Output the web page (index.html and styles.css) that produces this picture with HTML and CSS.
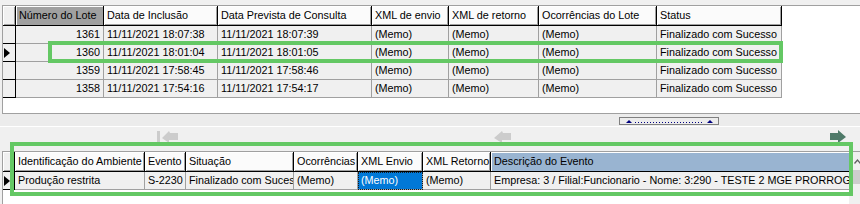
FILE: index.html
```html
<!DOCTYPE html>
<html lang="pt-BR">
<head>
<meta charset="utf-8">
<title>Lotes</title>
<link rel="stylesheet" href="styles.css">
</head>
<body>
<div class="top-strip"></div>

<div class="grid grid-top">
  <div class="row head">
    <div class="cell ind t0"></div>
    <div class="cell t1 sorted">Número do Lote</div>
    <div class="cell t2">Data de Inclusão</div>
    <div class="cell t3">Data Prevista de Consulta</div>
    <div class="cell t4">XML de envio</div>
    <div class="cell t5">XML de retorno</div>
    <div class="cell t6">Ocorrências do Lote</div>
    <div class="cell t7">Status</div>
  </div>
  <div class="row">
    <div class="cell ind t0"></div>
    <div class="cell t1 num">1361</div>
    <div class="cell t2">11/11/2021 18:07:38</div>
    <div class="cell t3">11/11/2021 18:07:39</div>
    <div class="cell t4">(Memo)</div>
    <div class="cell t5">(Memo)</div>
    <div class="cell t6">(Memo)</div>
    <div class="cell t7">Finalizado com Sucesso</div>
  </div>
  <div class="row">
    <div class="cell ind t0"><span class="arrow"></span></div>
    <div class="cell t1 num">1360</div>
    <div class="cell t2">11/11/2021 18:01:04</div>
    <div class="cell t3">11/11/2021 18:01:05</div>
    <div class="cell t4">(Memo)</div>
    <div class="cell t5">(Memo)</div>
    <div class="cell t6">(Memo)</div>
    <div class="cell t7">Finalizado com Sucesso</div>
  </div>
  <div class="row">
    <div class="cell ind t0"></div>
    <div class="cell t1 num">1359</div>
    <div class="cell t2">11/11/2021 17:58:45</div>
    <div class="cell t3">11/11/2021 17:58:46</div>
    <div class="cell t4">(Memo)</div>
    <div class="cell t5">(Memo)</div>
    <div class="cell t6">(Memo)</div>
    <div class="cell t7">Finalizado com Sucesso</div>
  </div>
  <div class="row">
    <div class="cell ind t0"></div>
    <div class="cell t1 num">1358</div>
    <div class="cell t2">11/11/2021 17:54:16</div>
    <div class="cell t3">11/11/2021 17:54:17</div>
    <div class="cell t4">(Memo)</div>
    <div class="cell t5">(Memo)</div>
    <div class="cell t6">(Memo)</div>
    <div class="cell t7">Finalizado com Sucesso</div>
  </div>
</div>

<div class="splitter">
  <div class="split-btn">
    <span class="up-tri"></span>
    <span class="dots"></span>
    <span class="up-tri"></span>
  </div>
</div>

<div class="nav">
  <div class="nav-btn">
    <svg class="ico off" width="21" height="13" viewBox="0 0 21 13"><rect x="0" y="1" width="3" height="12"/><polygon points="5,8 12,1 13,3 21,3 21,10 12,10 12,13"/></svg>
  </div>
  <div class="nav-btn">
    <svg class="ico off" width="17" height="13" viewBox="0 0 17 13"><polygon points="0,8 8,1 9,3 17,3 17,10 8,10 8,13"/></svg>
  </div>
  <div class="nav-btn">
    <svg class="ico on" width="16" height="13" viewBox="0 0 16 13"><polygon points="0,3 8,3 8,0 16,7 8,13 8,10 0,10"/></svg>
  </div>
</div>

<div class="grid grid-bottom">
  <div class="grid-body">
    <div class="row head">
      <div class="cell ind b0"></div>
      <div class="cell b1">Identificação do Ambiente</div>
      <div class="cell b2">Evento</div>
      <div class="cell b3">Situação</div>
      <div class="cell b4">Ocorrências</div>
      <div class="cell b5">XML Envio</div>
      <div class="cell b6">XML Retorno</div>
      <div class="cell b7 hl">Descrição do Evento</div>
    </div>
    <div class="row">
      <div class="cell ind b0"><span class="arrow"></span></div>
      <div class="cell b1">Produção restrita</div>
      <div class="cell b2">S-2230</div>
      <div class="cell b3">Finalizado com Sucesso</div>
      <div class="cell b4">(Memo)</div>
      <div class="cell b5 sel">(Memo)</div>
      <div class="cell b6">(Memo)</div>
      <div class="cell b7">Empresa: 3 / Filial:Funcionario - Nome: 3:290 - TESTE 2 MGE PRORROG LICENCA</div>
    </div>
  </div>
  <div class="vscroll">
    <div class="vs-up"><svg width="7" height="5" viewBox="0 0 7 5"><polyline points="0.5,4.5 3.5,1 6.5,4.5" fill="none" stroke="#606060" stroke-width="1.3"/></svg></div>
    <div class="vs-thumb"></div>
  </div>
</div>

<div class="mark mark-top"></div>
<div class="mark mark-bottom"></div>
</body>
</html>
```

FILE: styles.css
```css
* { box-sizing: border-box; }

body {
  margin: 0;
  width: 860px;
  height: 204px;
  overflow: hidden;
  position: relative;
  background: #f0f0f0;
  font-family: "Liberation Sans", Arial, sans-serif;
  font-size: 10.8px;
  color: #000;
}

.top-strip { height: 5px; }

.grid {
  margin-left: 2px;
  background: #fff;
  border-left: 1px solid #a0a0a0;
  border-top: 1px solid #a0a0a0;
  overflow: hidden;
}

.grid-top {
  width: 858px;
  height: 109px;
  border-bottom: 1px solid #a0a0a0;
}

.row { display: flex; height: 18px; }
.row.head { height: 20px; }

.cell {
  flex: none;
  height: 100%;
  padding: 0 3px;
  background: #f0f0f0;
  border-right: 1px solid #a0a0a0;
  border-bottom: 1px solid #a0a0a0;
  line-height: 17px;
  white-space: nowrap;
  overflow: hidden;
}

.head .cell {
  background: #fbfbfb;
  border-right: 1px solid #000;
  border-bottom: 1px solid #000;
  box-shadow: inset 1px 1px 0 #fff, inset -1px -1px 0 #a0a0a0;
  line-height: 19px;
}

.cell.ind,
.head .cell.ind {
  padding: 0;
  background: #f0f0f0;
  border-right: 1px solid #000;
  border-bottom: 1px solid #000;
  display: flex;
  align-items: center;
  padding-left: 1px;
}

.head .cell.sorted { background: #a0a0a0; box-shadow: inset 1px 1px 0 #fff; }
.head .cell.hl { background: #99b4d1; box-shadow: inset 1px 1px 0 #fff; }

.num { text-align: right; }

.arrow {
  width: 0;
  height: 0;
  border-left: 6px solid #000;
  border-top: 5px solid transparent;
  border-bottom: 5px solid transparent;
}

.t0 { width: 13px; }
.t1 { width: 88px; }
.t2 { width: 114px; }
.t3 { width: 154px; }
.t4 { width: 77px; }
.t5 { width: 90px; }
.t6 { width: 118px; }
.t7 { width: 125px; }

.b0 { width: 12px; }
.b1 { width: 130px; }
.b2 { width: 41px; }
.b3 { width: 108px; }
.b4 { width: 64px; }
.b5 { width: 65px; }
.b6 { width: 68px; }
.b7 { width: 420px; }

.cell.sel {
  background: #0078d7;
  color: #fff;
  outline: 1px dotted #1a1a1a;
  outline-offset: -1px;
}

/* splitter */
.splitter {
  height: 13px;
  padding-top: 3px;
  padding-left: 619px;
  border-bottom: 1px solid #fff;
  background: #ececec;
}

.split-btn {
  width: 100px;
  height: 8px;
  border: 1px solid #808080;
  display: flex;
  align-items: center;
  gap: 3px;
  padding: 0 5px 0 6px;
}

.up-tri {
  width: 0;
  height: 0;
  border-left: 3px solid transparent;
  border-right: 3px solid transparent;
  border-bottom: 3px solid #000080;
  margin-top: 1px;
}

.dots {
  flex: 1;
  height: 1px;
  margin-top: 2px;
  background: repeating-linear-gradient(to right, #000080 0 1px, transparent 1px 3px);
}

/* navigator */
.nav {
  height: 24px;
  display: flex;
  overflow: hidden;
}

.nav-btn {
  flex: none;
  width: 335px;
  display: flex;
  justify-content: center;
  align-items: flex-start;
  padding-top: 3px;
}

.ico.off { fill: #cccccc; }
.ico.on { fill: #4f7a69; }

/* bottom grid */
.grid-bottom {
  width: 866px;
  height: 60px;
  display: flex;
  border-top: 1px solid #a0a0a0;
}

.grid-body {
  flex: none;
  width: 846px;
  overflow: hidden;
}

.vscroll {
  flex: none;
  width: 17px;
  background: #f0f0f0;
  display: flex;
  flex-direction: column;
}

.vs-up {
  height: 18px;
  display: flex;
  align-items: center;
  justify-content: center;
}

.vs-thumb {
  height: 14px;
  margin: 0 2px;
  background: #cdcdcd;
}

/* annotation rectangles */
.mark {
  position: absolute;
  border: 4px solid #64c864;
}

.mark-top {
  left: 48px;
  top: 41px;
  width: 735px;
  height: 22px;
}

.mark-bottom {
  left: 10px;
  top: 142px;
  width: 843px;
  height: 54px;
}
```
